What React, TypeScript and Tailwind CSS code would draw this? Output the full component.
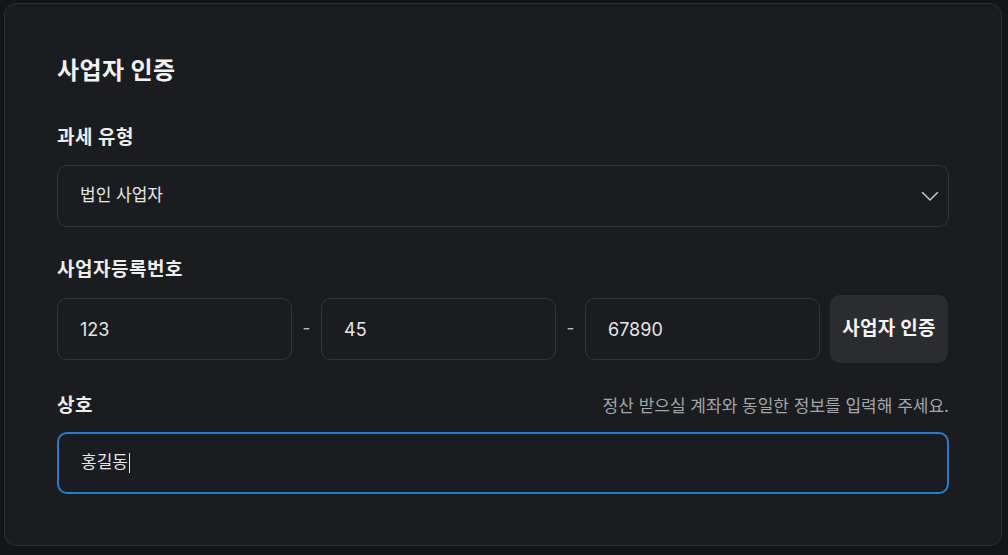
import React from 'react';

const font = { fontFamily: 'Inter, "Noto Sans CJK KR", sans-serif' };

const Chevron = () => (
  <svg width="18" height="11" viewBox="0 0 18 11" fill="none">
    <path d="M1.5 1.5 9 9l7.5-7.5" stroke="#c4c6ca" strokeWidth="1.5" strokeLinecap="round" strokeLinejoin="round" />
  </svg>
);

const NumberBox = ({ value }: { value: string }) => (
  <div className="flex h-[62px] w-[235px] items-center rounded-[10px] border border-[#34353a] px-[22px] text-[18px] text-[#e4e5e7]">
    {value}
  </div>
);

export default function App() {
  return (
    <div className="h-[555px] w-[1008px] bg-[#141518] pl-1 pt-[3px]" style={font}>
      <div className="flex h-[543px] w-[998px] flex-col rounded-xl border border-[#2c2d31] bg-[#1b1c20] px-[52px] pt-[51px]">
        <h1 className="text-[24px] font-bold leading-[32px] tracking-[0.4px] text-[#f1f2f3]">사업자 인증</h1>

        <label className="mt-[39px] mb-[15px] text-[19px] font-bold leading-6 tracking-[0.5px] text-[#eceded]">과세 유형</label>
        <div className="flex h-[62px] items-center justify-between rounded-[10px] border border-[#34353a] pl-[22px] pr-[9px] text-[17px] text-[#e4e5e7]">
          <span>법인 사업자</span>
          <Chevron />
        </div>

        <label className="mt-[31px] mb-[13px] text-[19px] font-bold leading-6 tracking-[0.5px] text-[#eceded]">사업자등록번호</label>
        <div className="flex h-[68px] items-center gap-[10px]">
          <NumberBox value="123" />
          <span className="w-[9px] text-center text-[17px] text-[#b9bbbf]">-</span>
          <NumberBox value="45" />
          <span className="w-[9px] text-center text-[17px] text-[#b9bbbf]">-</span>
          <NumberBox value="67890" />
          <button className="flex h-[68px] w-[118px] items-center justify-center rounded-[10px] bg-[#2a2c30] text-[19px] font-bold tracking-[0.3px] text-[#f4f4f5]">
            사업자 인증
          </button>
        </div>

        <div className="mt-[31px] mb-[14px] flex items-end justify-between">
          <label className="text-[19px] font-bold leading-6 tracking-[0.5px] text-[#eceded]">상호</label>
          <span className="text-[17px] leading-6 text-[#a3a6ab]">정산 받으실 계좌와 동일한 정보를 입력해 주세요.</span>
        </div>
        <div className="flex h-[62px] items-center rounded-[10px] border-2 border-[#2b7bcc] px-[22px] text-[17px] text-[#e4e5e7]">
          <span>홍길동</span>
          <span className="ml-px h-[20px] w-px bg-[#e4e5e7]" />
        </div>
      </div>
    </div>
  );
}
